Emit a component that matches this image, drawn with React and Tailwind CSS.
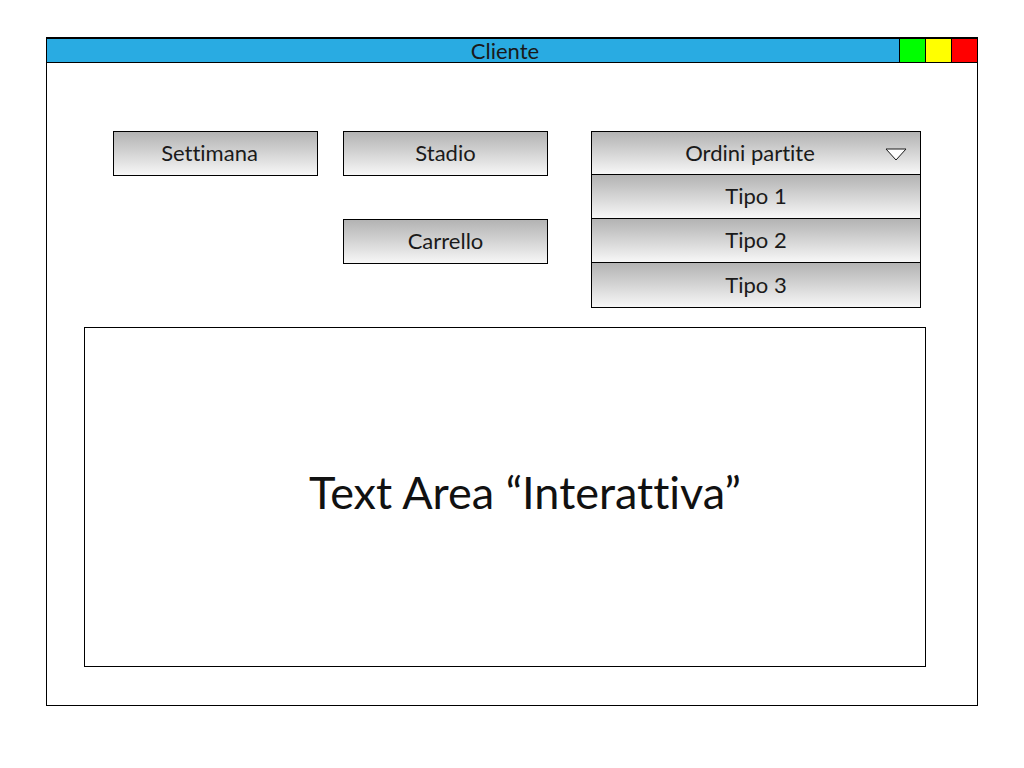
const gradiente = 'bg-gradient-to-b from-[#b3b3b3] to-[#f7f7f7]'

function Bottone({ label, className = '' }) {
  return (
    <div className={`w-[205px] h-[45px] border border-black ${gradiente} flex items-center justify-center pb-[3px] text-[22px] text-[#1a1a1a] ${className}`}>
      {label}
    </div>
  )
}

export default function App() {
  return (
    <div className="w-[1024px] h-[768px] bg-white pt-[37px] pl-[46px] font-['Lato','Open_Sans',sans-serif] [font-variant-ligatures:none]">
      {/* Finestra */}
      <div className="w-[932px] h-[669px] border border-black border-t-2 flex flex-col">
        {/* Barra titolo */}
        <div className="h-[24px] bg-[#29abe2] border-b border-black flex">
          <div className="flex-1 flex items-center justify-center pl-[64px] text-[22px] leading-none text-[#1a1a1a]">Cliente</div>
          <div className="w-[26px] bg-[#00ff00] border-l border-black" />
          <div className="w-[26px] bg-[#ffff00] border-l border-black" />
          <div className="w-[26px] bg-[#ff0000] border-l border-black" />
        </div>

        {/* Pulsanti */}
        <div className="flex pt-[68px] pl-[66px]">
          <Bottone label="Settimana" className="pr-[12px]" />
          <div className="ml-[25px] flex flex-col">
            <Bottone label="Stadio" />
            <Bottone label="Carrello" className="mt-[43px]" />
          </div>
          <div className="ml-[43px] w-[330px] border border-black divide-y divide-black flex flex-col">
            <div className={`h-[43px] ${gradiente} flex items-center justify-center pb-[2px] relative text-[22px] text-[#1a1a1a]`}>
              <span className="pr-[12px]">Ordini partite</span>
              <svg className="absolute right-[13px] top-[16px]" width="22" height="13" viewBox="0 0 22 13">
                <path d="M1 1 H21 L11 12 Z" fill="white" stroke="#1a1a1a" strokeWidth="1" />
              </svg>
            </div>
            {['Tipo 1', 'Tipo 2', 'Tipo 3'].map((t) => (
              <div key={t} className={`h-[44px] ${gradiente} flex items-center justify-center pb-[2px] text-[22px] text-[#1a1a1a]`}>{t}</div>
            ))}
          </div>
        </div>

        {/* Area di testo */}
        <div className="ml-[37px] mt-[19px] w-[842px] h-[340px] border border-black flex items-center justify-center pl-[40px] pb-[8px]">
          <span className="text-[45px] text-[#111]">Text Area “Interattiva”</span>
        </div>
      </div>
    </div>
  )
}
